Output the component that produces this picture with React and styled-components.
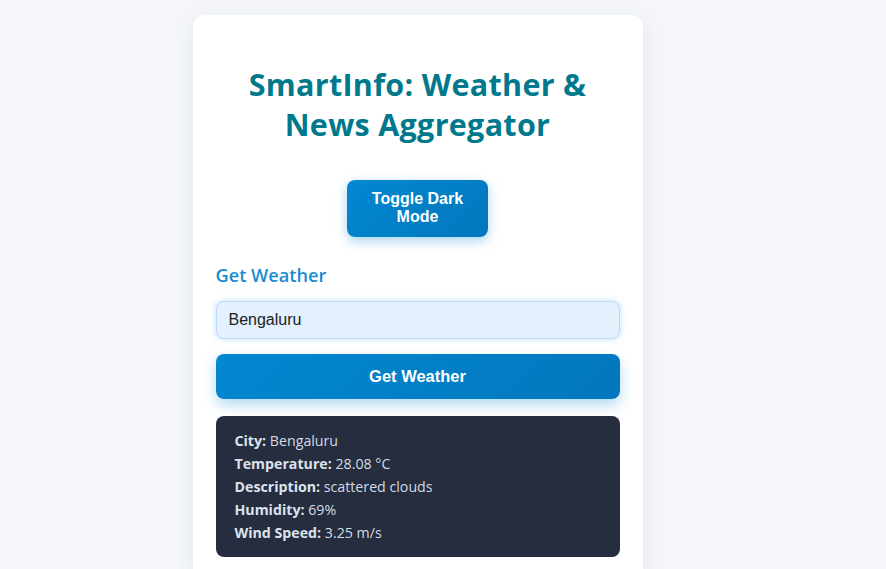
import React from "react";
import styled, { createGlobalStyle } from "styled-components";

const Global = createGlobalStyle`
  html, body { margin: 0; padding: 0; }
  body {
    background: #f4f6fa;
    font-family: "Segoe UI", "Open Sans", sans-serif;
  }
`;

const Page = styled.div`
  display: flex;
  justify-content: center;
  padding: 15px 51px 0 0;
  min-height: 569px;
  box-sizing: border-box;
`;

const Card = styled.div`
  width: 450px;
  box-sizing: border-box;
  background: #ffffff;
  border-radius: 12px;
  padding: 26px 23px 24px;
  box-shadow: 0 4px 20px rgba(40, 60, 100, 0.08);
  display: flex;
  flex-direction: column;
  align-items: stretch;
`;

const Title = styled.h1`
  margin: 23px 0 21px;
  text-align: center;
  color: #00798c;
  font-size: 30.5px;
  line-height: 40px;
  font-weight: 700;
  letter-spacing: 0.3px;
  padding: 0 20px;
`;

const ToggleButton = styled.button`
  align-self: center;
  width: 141px;
  margin-top: 15px;
  padding: 10px 20px;
  border: none;
  border-radius: 8px;
  background: linear-gradient(135deg, #0288d1, #0277bd);
  color: #ffffff;
  font-family: "Liberation Sans", Arial, sans-serif;
  font-weight: 700;
  font-size: 16px;
  line-height: 18.4px;
  box-shadow: 0 4px 12px rgba(2, 136, 209, 0.35);
`;

const SectionTitle = styled.h2`
  margin: 26px 0 14px;
  color: #1b8bd0;
  font-size: 18.2px;
  font-weight: 600;
  line-height: 24px;
`;

const Input = styled.input`
  box-sizing: border-box;
  width: 100%;
  height: 38px;
  padding: 0 12px;
  border: 1px solid #bcdaf7;
  border-radius: 8px;
  background: #e3f0fd;
  color: #222;
  font-family: "Liberation Sans", Arial, sans-serif;
  font-size: 16px;
  box-shadow: 0 0 6px rgba(120, 180, 240, 0.45);
  outline: none;
`;

const PrimaryButton = styled.button`
  width: 100%;
  height: 45px;
  margin-top: 15px;
  border: none;
  border-radius: 8px;
  background: linear-gradient(135deg, #0288d1, #0277bd);
  color: #fff;
  font-family: "Liberation Sans", Arial, sans-serif;
  font-weight: 700;
  font-size: 16.5px;
  box-shadow: 0 6px 14px rgba(2, 136, 209, 0.3);
`;

const Result = styled.div`
  margin-top: 17px;
  background: #252d3e;
  border-radius: 8px;
  padding: 13px 19px 13px;
  color: #d4dbe5;
  font-size: 14.2px;
  line-height: 23px;
`;

const Row = styled.div`
  b { font-weight: 700; color: #dde3ec; }
`;

const rows = [
  ["City:", "Bengaluru"],
  ["Temperature:", "28.08 °C"],
  ["Description:", "scattered clouds"],
  ["Humidity:", "69%"],
  ["Wind Speed:", "3.25 m/s"],
];

export default function App() {
  return (
    <>
      <Global />
      <Page>
        <Card>
          <Title>SmartInfo: Weather &amp; News Aggregator</Title>
          <ToggleButton>Toggle Dark Mode</ToggleButton>
          <SectionTitle>Get Weather</SectionTitle>
          <Input defaultValue="Bengaluru" />
          <PrimaryButton>Get Weather</PrimaryButton>
          <Result>
            {rows.map(([k, v]) => (
              <Row key={k}>
                <b>{k}</b> {v}
              </Row>
            ))}
          </Result>
        </Card>
      </Page>
    </>
  );
}
